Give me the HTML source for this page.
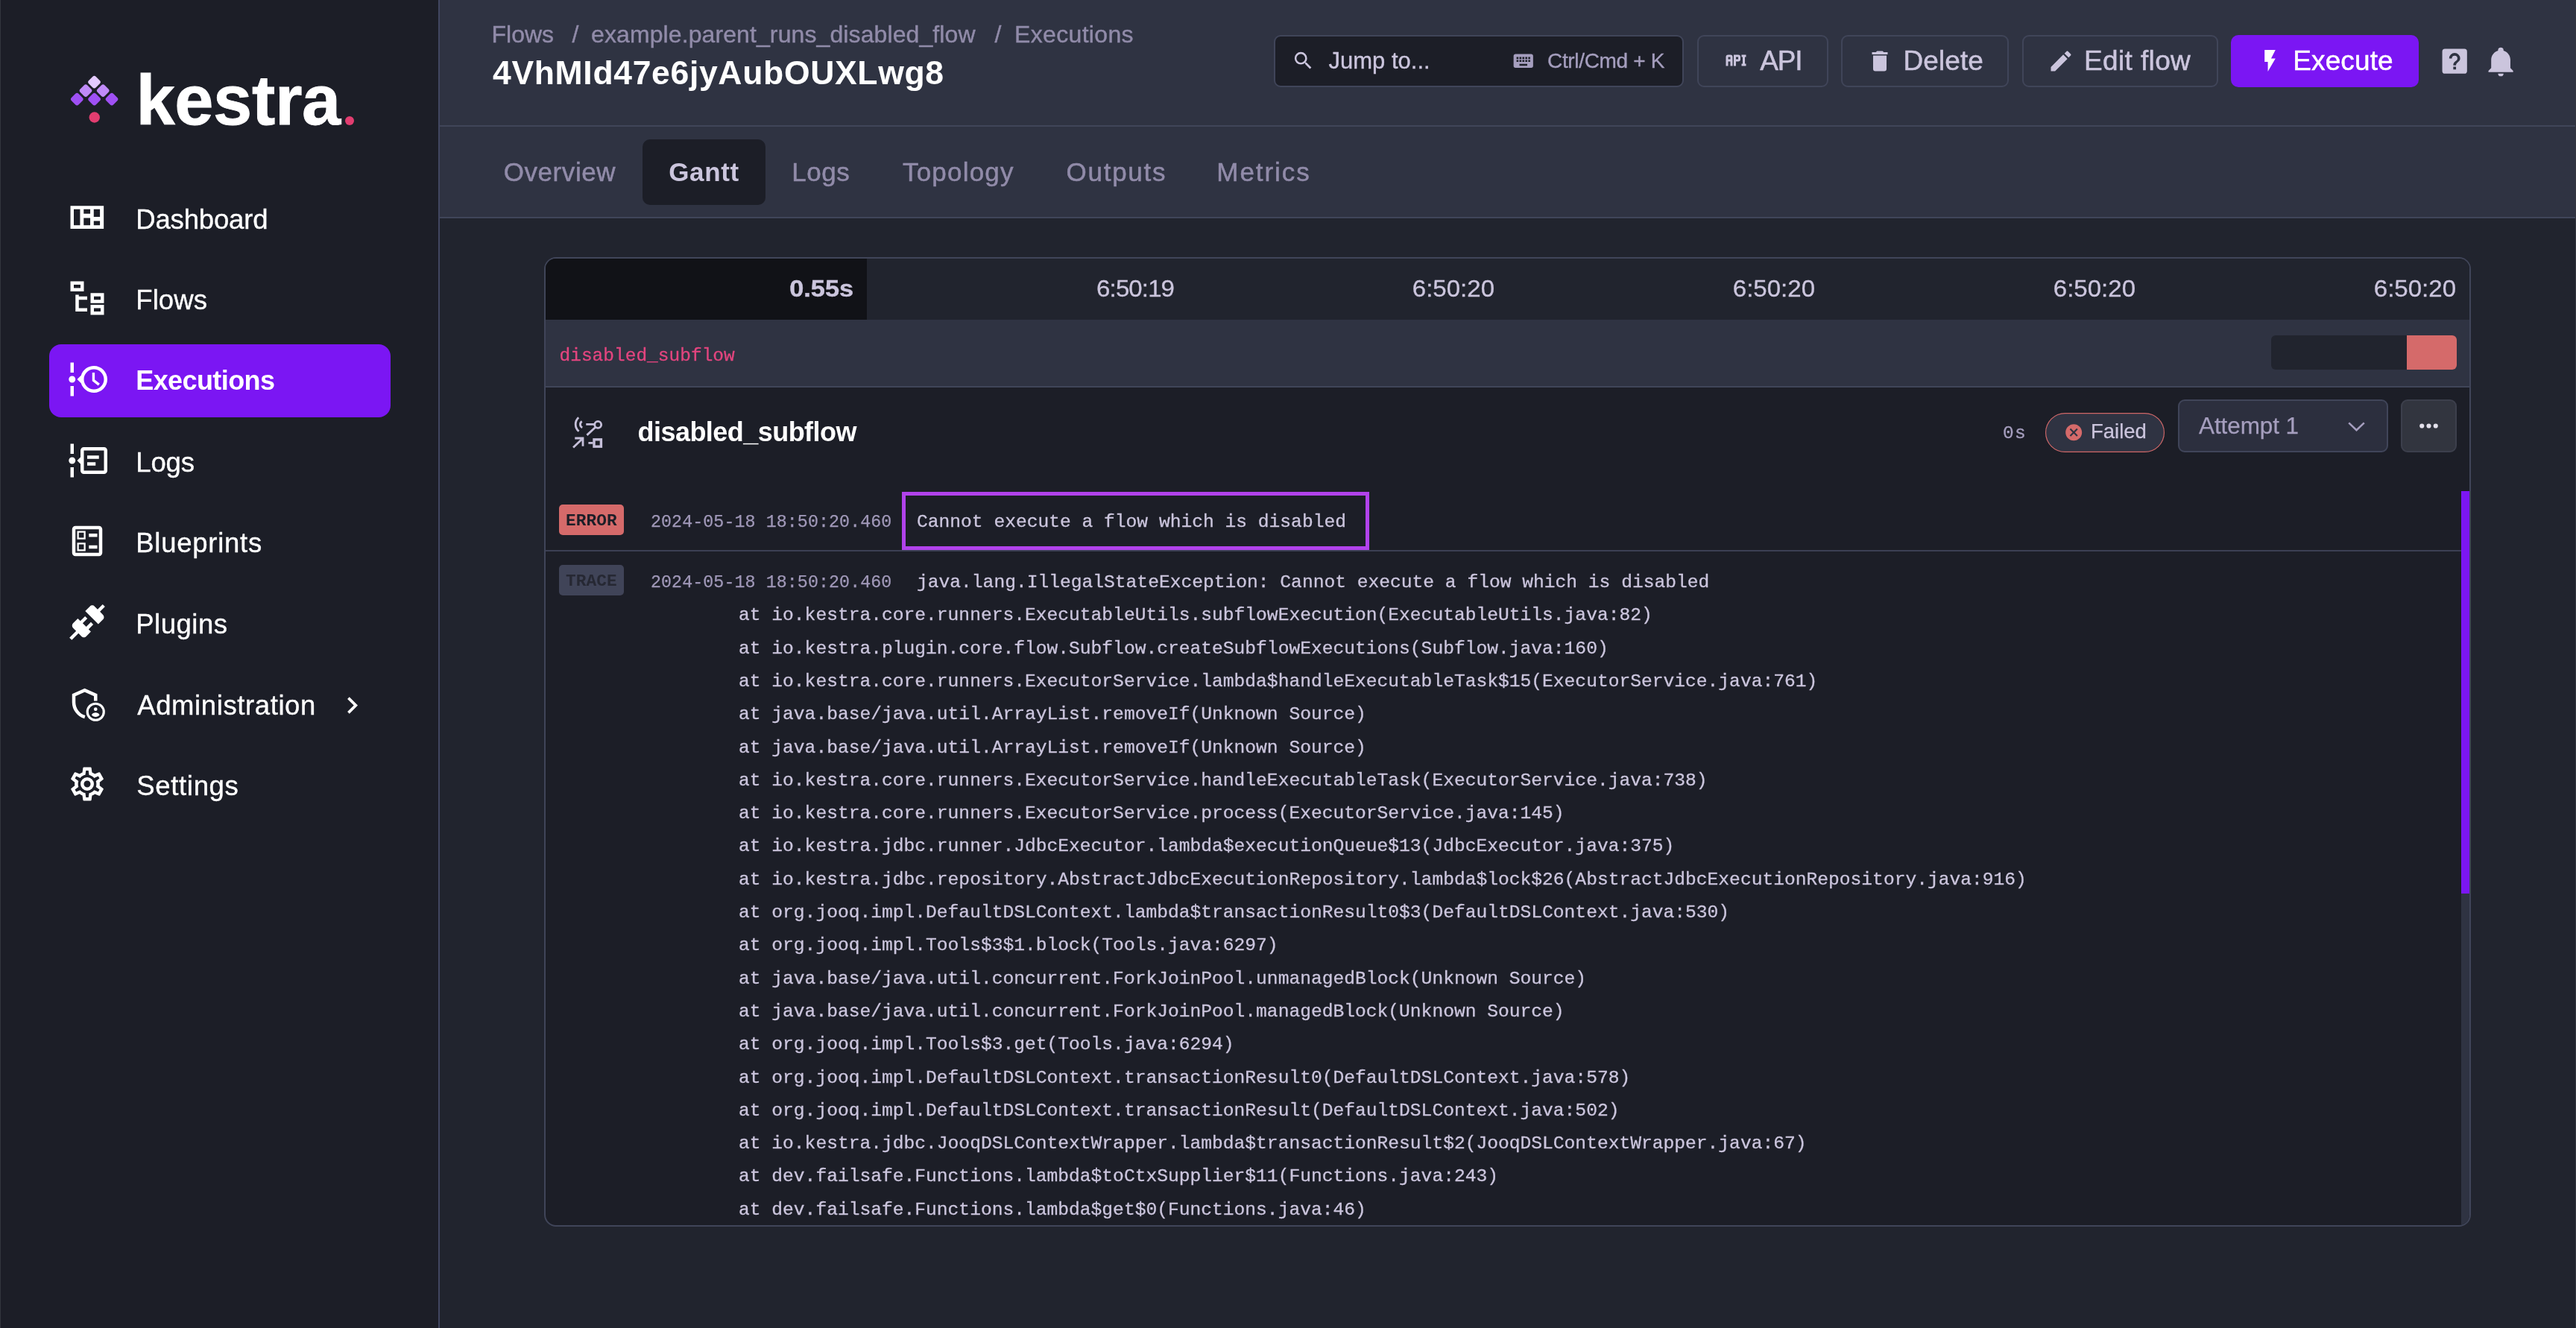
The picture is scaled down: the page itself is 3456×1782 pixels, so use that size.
<!DOCTYPE html>
<html lang="en">
<head>
<meta charset="utf-8">
<title>Kestra - Execution 4VhMId47e6jyAubOUXLwg8</title>
<style>
*{box-sizing:border-box;margin:0;padding:0}
html,body{width:3456px;height:1782px;overflow:hidden;background:#21242e}
body{position:relative;font-family:"Liberation Sans",sans-serif;color:#fff;-webkit-font-smoothing:antialiased}
svg{display:block}
.abs{position:absolute}
.nw{white-space:nowrap}

/* ---------- sidebar ---------- */
.sidebar{position:absolute;left:0;top:0;width:590px;height:1782px;background:#1c1e27;border-right:2px solid #414660}
.logo{position:absolute;left:0;top:0;width:588px;height:230px}
.logo .word{position:absolute;left:182.4px;top:88px;font-size:93.8px;font-weight:700;letter-spacing:-0.3px;line-height:94.6px;-webkit-text-stroke:.9px #fff;color:#fff;white-space:nowrap}
.logo .dot{position:absolute;left:463px;top:156.2px;width:12px;height:12px;border-radius:50%;background:#e23d70}
.menu{position:absolute;left:66px;top:244.8px;width:458px;list-style:none}
.menu li{position:relative;height:98px;margin-bottom:10.64px;border-radius:16px;font-size:36.5px;color:#fff}
.menu li.active{background:#7b16f3;font-weight:700;font-size:36px}
.menu li svg{position:absolute;left:23.75px;top:20px;width:54px;height:54px;fill:#fff}
.menu li span{position:absolute;left:116.25px;top:0;line-height:99px;white-space:nowrap;-webkit-text-stroke:.35px #fff}
.menu li.active span{-webkit-text-stroke:0;line-height:98px}
.menu li .chev{left:383.6px;top:27px;width:45px;height:45px}

/* ---------- top bar ---------- */
.topbar{position:absolute;left:590px;top:0;width:2866px;height:170px;background:#2f3342;border-bottom:2px solid #404559}
.crumbs{position:absolute;left:69.5px;top:23.6px;font-size:32px;line-height:44px;color:#918ba9;white-space:nowrap}
.crumbs span{position:absolute;top:0;white-space:nowrap}
h1{position:absolute;left:71px;top:69.6px;font-size:44.5px;line-height:56px;font-weight:700;letter-spacing:.67px;color:#fff;white-space:nowrap}
.btn{position:absolute;top:47px;height:70px;border:2px solid #404559;border-radius:9px;color:#cbc5dd;font-size:37px;white-space:nowrap}
.btn svg{position:absolute;fill:#cbc5dd}
.btn span{position:absolute;top:0;line-height:66px}
.search{background:#1c1e27}

/* ---------- tabs ---------- */
.tabs{position:absolute;left:590px;top:170px;width:2866px;height:123px;background:#2f3342;border-bottom:2px solid #404559;font-size:35px;color:#918ba9}
.tabs a{position:absolute;top:17px;height:88px;line-height:87px;white-space:nowrap;color:#918ba9;text-decoration:none}
.tabs a.on{background:#1c1e27;border-radius:10px;color:#cbc5dd;font-weight:700;text-align:center}

/* ---------- gantt card ---------- */
.card{position:absolute;left:730px;top:345px;width:2585px;height:1301px;border:2px solid #404559;border-radius:16px;background:#1c1e27;overflow:hidden}
.mono{font-family:"Liberation Mono",monospace}

/* card internals: coordinates relative to card padding box (origin 732,347) */
.thead{position:absolute;left:0;top:0;width:2581px;height:82px;background:#21242e;font-size:31.2px;color:#cbc5dd}
.thead div{position:absolute;top:0;height:82px;line-height:82px;text-align:right;padding-right:17.5px;white-space:nowrap}
.thead .dur{left:0;width:431px;background:#111217;font-weight:700;letter-spacing:0;padding-right:18px}
.taskrow{position:absolute;left:0;top:82px;width:2581px;height:90.5px;background:#2f3342;border-bottom:2px solid #404559}
.taskrow .id{position:absolute;left:18.5px;top:0;line-height:97px;font-size:24.5px;color:#e3457f;white-space:nowrap}
.bar{position:absolute;left:2315px;top:21px;width:249px;height:46px;border-radius:6px;background:#21242e;overflow:hidden}
.bar i{position:absolute;right:0;top:0;width:67.5px;height:46px;background:#d56a6a}
.taskhead{position:absolute;left:0;top:172.5px;width:2581px;height:140px}
.taskhead h2{position:absolute;left:123.5px;top:38px;font-size:36px;letter-spacing:-.54px;line-height:44px;font-weight:700;color:#fff;white-space:nowrap}
.dur0{position:absolute;left:2680px;top:554px;font-size:24.5px;line-height:40px;color:#a59ebe;letter-spacing:1.3px}
.pill{position:absolute;left:2012px;top:34.5px;width:160px;height:53px;border:0 solid #cf6666;box-shadow:inset 0 0 0 1.15px #cf6666;border-radius:27px;background:#2f3342;font-size:28px;color:#cbc5dd}
.pill svg{position:absolute;left:25px;top:13.3px;width:26.4px;height:26.4px;fill:#d56a6a}
.pill span{position:absolute;left:61px;top:0;line-height:50px;font-size:27.5px}
.select{position:absolute;left:2190px;top:16px;width:282px;height:71px;border:2px solid #404559;border-radius:9px;background:#2c2f3e;font-size:31.5px;color:#a59ebe}
.select span{position:absolute;left:26px;top:0;line-height:67px;letter-spacing:-.1px}
.select svg{position:absolute;left:226px;top:28px;width:23px;height:13px;fill:none;stroke:#a59ebe;stroke-width:2.6}
.more{position:absolute;left:2489px;top:16px;width:75px;height:71px;border:2px solid #3c3f4c;border-radius:9px;background:#32353f}
.more svg{position:absolute;left:17px;top:15px;width:37px;height:37px;fill:#e4e1ec}
.logs{position:absolute;left:0;top:312px;width:2570px;height:990px;font-size:24.62px;line-height:44.3px;color:#cbc5dd}
.logrow{position:absolute;left:0;width:2570px}
.badge{position:absolute;left:18px;width:87px;height:41px;border-radius:5px;font-size:22.75px;font-weight:700;line-height:41px;padding-top:2px;text-align:center;letter-spacing:.1px}
.badge.err{background:#d56a6a;color:#1c1e27}
.badge.trc{background:#404458;color:#262833}
.ts{position:absolute;left:141px;font-size:23.3px;color:#a098b8;white-space:nowrap;letter-spacing:.08px}
.msg{position:absolute;white-space:pre;color:#cbc5dd;-webkit-text-stroke:.3px #cbc5dd}
.hl{position:absolute;left:478px;top:1.3px;width:626.6px;height:77.3px;border:5.5px solid #b142eb}
.sep{position:absolute;left:0;top:79px;width:2570px;height:2px;background:#3c4054}
.scroll{position:absolute;left:2570px;top:312px;width:11px;height:990px;background:#2f3342}
.scroll i{position:absolute;left:0;top:0;width:11px;height:540px;background:#7b16f3}

.crumbs span{-webkit-text-stroke:.4px #918ba9}
.tabs a{-webkit-text-stroke:.5px #918ba9}
.tabs a.on{-webkit-text-stroke:0}
.btn span{-webkit-text-stroke:.5px currentColor}
.search span{-webkit-text-stroke:.35px currentColor}
.pill span,.select span{-webkit-text-stroke:.25px currentColor}
.ts{-webkit-text-stroke:.25px #a098b8}
.taskrow .id{-webkit-text-stroke:.3px #e3457f}

.thead span{display:inline-block;transform:scaleX(1.06);transform-origin:100% 50%;-webkit-text-stroke:.3px #cbc5dd}
.thead .dur span{transform:scaleX(1.1);-webkit-text-stroke:.4px #cbc5dd}
</style>
</head>
<body>
<div id="app" style="position:absolute;left:0;top:0;width:3456px;height:1782px;will-change:transform">

<aside class="sidebar">
  <div class="logo">
    <svg class="abs" style="left:90px;top:96px" width="74" height="74" viewBox="0 0 74 74">
      <g transform="translate(-90,-96)">
        <rect x="119.80" y="103.50" width="13.4" height="13.4" rx="3" transform="rotate(45 126.5 110.2)" fill="#e3c9ff"/>
        <rect x="108.30" y="114.90" width="13.4" height="13.4" rx="3" transform="rotate(45 115 121.6)" fill="#c08bf9"/>
        <rect x="131.50" y="114.90" width="13.4" height="13.4" rx="3" transform="rotate(45 138.2 121.6)" fill="#c08bf9"/>
        <rect x="96.60" y="126.50" width="13.4" height="13.4" rx="3" transform="rotate(45 103.3 133.2)" fill="#9f50f4"/>
        <rect x="119.90" y="126.50" width="13.4" height="13.4" rx="3" transform="rotate(45 126.6 133.2)" fill="#9f50f4"/>
        <rect x="143.30" y="126.50" width="13.4" height="13.4" rx="3" transform="rotate(45 150 133.2)" fill="#9f50f4"/>
        <circle cx="126.75" cy="157.5" r="7.2" fill="#e23d70"/>
      </g>
    </svg>
    <div class="word">kestra</div><div class="dot"></div>
  </div>
  <ul class="menu">
    <li><svg viewBox="0 0 24 24"><path fill-rule="evenodd" d="M2 4.95H21.85V18.7H2Z M4 7V16.6H7.75V7Z M9.9 7V9.67H13.8V7Z M9.9 12.17V16.6H13.8V12.17Z M15.9 7V11.6H19.6V7Z M15.9 14V16.6H19.6V14Z"/></svg><span style="letter-spacing:-0.16px">Dashboard</span></li>
    <li><svg viewBox="0 0 24 24"><path d="M12 13H7V18H12V20H5V10H7V11H12V13M8 4V6H4V4H8M10 2H2V8H10V2M20 11V13H16V11H20M22 9H14V15H22V9M20 18V20H16V18H20M22 16H14V22H22V16Z"/></svg><span style="letter-spacing:0.11px">Flows</span></li>
    <li class="active"><svg viewBox="0 0 24 24"><path d="M4 2V8H2V2H4M2 22H4V16H2V22M5 12C5 13.11 4.11 14 3 14C1.9 14 1 13.11 1 12C1 10.9 1.9 10 3 10C4.11 10 5 10.9 5 12M16 4C20.42 4 24 7.58 24 12C24 16.42 20.42 20 16 20C12.4 20 9.36 17.62 8.35 14.35L6 12L8.35 9.65C9.36 6.38 12.4 4 16 4M16 6C12.69 6 10 8.69 10 12C10 15.31 12.69 18 16 18C19.31 18 22 15.31 22 12C22 8.69 19.31 6 16 6M15 13L18.53 15.79L19.53 14.5L16.5 12.25V8H15V13Z"/></svg><span style="letter-spacing:-0.59px">Executions</span></li>
    <li><svg viewBox="0 0 24 24"><path d="M5 12C5 13.11 4.11 14 3 14C1.9 14 1 13.11 1 12C1 10.9 1.9 10 3 10C4.11 10 5 10.9 5 12M4 2V8H2V2H4M2 22V16H4V22H2M24 6V18C24 19.11 23.11 20 22 20H10C8.9 20 8 19.11 8 18V14L6 12L8 10V6C8 4.89 8.9 4 10 4H22C23.11 4 24 4.89 24 6M10 6V18H22V6H10M12 9H19V11H12V9M12 13H17V15H12V13Z"/></svg><span style="letter-spacing:-0.13px">Logs</span></li>
    <li><svg viewBox="0 0 24 24"><path d="M13 7.5H18V9.5H13V7.5M13 14.5H18V16.5H13V14.5M19 3C20.1 3 21 3.9 21 5V19C21 20.1 20.1 21 19 21H5C3.9 21 3 20.1 3 19V5C3 3.9 3.9 3 5 3H19M19 19V5H5V19H19M11 6V11H6V6H11M10 10V7H7V10H10M11 13V18H6V13H11M10 17V14H7V17H10Z"/></svg><span style="letter-spacing:0.74px">Blueprints</span></li>
    <li><svg viewBox="0 0 24 24"><path d="M21.4 7.5C22.2 8.3 22.2 9.6 21.4 10.3L18.6 13.1L10.8 5.3L13.6 2.5C14.4 1.7 15.7 1.7 16.4 2.5L18.2 4.3L21.2 1.3L22.6 2.7L19.6 5.7L21.4 7.5M15.6 13.3L14.2 11.9L11.4 14.7L9.3 12.6L12.1 9.8L10.7 8.4L7.9 11.2L6.4 9.8L3.6 12.6C2.8 13.4 2.8 14.7 3.6 15.4L5.4 17.2L1.4 21.2L2.8 22.6L6.8 18.6L8.6 20.4C9.4 21.2 10.7 21.2 11.4 20.4L14.2 17.6L12.8 16.2L15.6 13.3Z"/></svg><span style="letter-spacing:0.5px">Plugins</span></li>
    <li><svg viewBox="0 0 24 24"><g fill="none" stroke="#fff"><path stroke-width="2" d="M17 10.4V6.95L10.5 4.1L4 6.95V11.2C4 15.3 6.8 19 10.6 20.05"/><circle cx="17" cy="17" r="4.9" stroke-width="1.4"/></g><circle cx="17" cy="15.4" r="1.05"/><path d="M14.7 18.9C14.7 17.9 16.2 17.4 17 17.4S19.3 17.9 19.3 18.9C18.8 19.6 17.9 20 17 20S15.2 19.6 14.7 18.9Z"/></svg><span style="letter-spacing:0.6px;margin-left:2px">Administration</span><svg class="chev" viewBox="0 0 24 24"><path d="M8.59,16.58L13.17,12L8.59,7.41L10,6L16,12L10,18L8.59,16.58Z"/></svg></li>
    <li><svg viewBox="0 0 24 24"><path d="M12,8A4,4 0 0,1 16,12A4,4 0 0,1 12,16A4,4 0 0,1 8,12A4,4 0 0,1 12,8M12,10A2,2 0 0,0 10,12A2,2 0 0,0 12,14A2,2 0 0,0 14,12A2,2 0 0,0 12,10M10,22C9.75,22 9.54,21.82 9.5,21.58L9.13,18.93C8.5,18.68 7.96,18.34 7.44,17.94L4.95,18.95C4.73,19.03 4.46,18.95 4.34,18.73L2.34,15.27C2.21,15.05 2.27,14.78 2.46,14.63L4.57,12.97L4.5,12L4.57,11L2.46,9.37C2.27,9.22 2.21,8.95 2.34,8.73L4.34,5.27C4.46,5.05 4.73,4.96 4.95,5.05L7.44,6.05C7.96,5.66 8.5,5.32 9.13,5.07L9.5,2.42C9.54,2.18 9.75,2 10,2H14C14.25,2 14.46,2.18 14.5,2.42L14.87,5.07C15.5,5.32 16.04,5.66 16.56,6.05L19.05,5.05C19.27,4.96 19.54,5.05 19.66,5.27L21.66,8.73C21.79,8.95 21.73,9.22 21.54,9.37L19.43,11L19.5,12L19.43,13L21.54,14.63C21.73,14.78 21.79,15.05 21.66,15.27L19.66,18.73C19.54,18.95 19.27,19.04 19.05,18.95L16.56,17.95C16.04,18.34 15.5,18.68 14.87,18.93L14.5,21.58C14.46,21.82 14.25,22 14,22H10M11.25,4L10.88,6.61C9.68,6.86 8.62,7.5 7.85,8.39L5.44,7.35L4.69,8.65L6.8,10.2C6.4,11.37 6.4,12.64 6.8,13.8L4.68,15.36L5.43,16.66L7.86,15.62C8.63,16.5 9.68,17.14 10.87,17.38L11.24,20H12.76L13.13,17.39C14.32,17.14 15.37,16.5 16.14,15.62L18.57,16.66L19.32,15.36L17.2,13.81C17.6,12.64 17.6,11.37 17.2,10.2L19.31,8.65L18.56,7.35L16.15,8.39C15.38,7.5 14.32,6.86 13.12,6.62L12.75,4H11.25Z"/></svg><span style="letter-spacing:0.67px;margin-left:1px">Settings</span></li>
  </ul>
</aside>

<header class="topbar">
  <div class="crumbs">
    <span style="left:0;letter-spacing:0">Flows</span>
    <span style="left:108px">/</span>
    <span style="left:133.5px;letter-spacing:.1px">example.parent_runs_disabled_flow</span>
    <span style="left:675px">/</span>
    <span style="left:701.5px;letter-spacing:.34px">Executions</span>
  </div>
  <h1>4VhMId47e6jyAubOUXLwg8</h1>

  <div class="btn search" style="left:1119px;width:550px">
    <svg style="left:21.9px;top:17.1px;width:30.9px;height:30.9px;fill:#cbc5dd" class="abs" viewBox="0 0 24 24"><path d="M9.5,3A6.5,6.5 0 0,1 16,9.5C16,11.11 15.41,12.59 14.44,13.73L14.71,14H15.5L20.5,19L19,20.5L14,15.5V14.71L13.73,14.44C12.59,15.41 11.11,16 9.5,16A6.5,6.5 0 0,1 3,9.5A6.5,6.5 0 0,1 9.5,3M9.5,5C7,5 5,7 5,9.5C5,12 7,14 9.5,14C12,14 14,12 14,9.5C14,7 12,5 9.5,5Z"/></svg>
    <span style="left:71.5px;font-size:31px;color:#cbc5dd">Jump to...</span>
    <svg style="left:316.6px;top:16.5px;width:31.5px;height:31.5px;fill:#a59ebe" class="abs" viewBox="0 0 24 24"><path d="M19,10H17V8H19M19,13H17V11H19M16,10H14V8H16M16,13H14V11H16M16,17H8V15H16M7,10H5V8H7M7,13H5V11H7M8,11H10V13H8M8,8H10V10H8M11,11H13V13H11M11,8H13V10H11M20,5H4C2.89,5 2,5.89 2,7V17A2,2 0 0,0 4,19H20A2,2 0 0,0 22,17V7C22,5.89 21.1,5 20,5Z"/></svg>
    <span style="left:365px;font-size:28px;letter-spacing:-.33px;color:#a59ebe">Ctrl/Cmd + K</span>
  </div>
  <div class="btn" style="left:1687px;width:176px">
    <svg style="left:32.4px;top:14px;width:36px;height:36px" class="abs" viewBox="0 0 24 24"><path d="M7 7H5A2 2 0 0 0 3 9V17H5V13H7V17H9V9A2 2 0 0 0 7 7M7 11H5V9H7M14 7H10V17H12V13H14A2 2 0 0 0 16 11V9A2 2 0 0 0 14 7M14 11H12V9H14M20 9V15H21V17H17V15H18V9H17V7H21V9Z"/></svg>
    <span style="left:82.25px;letter-spacing:-1.15px">API</span>
  </div>
  <div class="btn" style="left:1880px;width:225px">
    <svg style="left:31.75px;top:14.5px;width:36px;height:36px" class="abs" viewBox="0 0 24 24"><path d="M19,4H15.5L14.5,3H9.5L8.5,4H5V6H19M6,19A2,2 0 0,0 8,21H16A2,2 0 0,0 18,19V7H6V19Z"/></svg>
    <span style="left:81.5px;letter-spacing:.09px">Delete</span>
  </div>
  <div class="btn" style="left:2123px;width:263px">
    <svg style="left:32.25px;top:14.75px;width:36px;height:36px" class="abs" viewBox="0 0 24 24"><path d="M20.71,7.04C21.1,6.65 21.1,6 20.71,5.63L18.37,3.29C18,2.9 17.35,2.9 16.96,3.29L15.12,5.12L18.87,8.87M3,17.25V21H6.75L17.81,9.93L14.06,6.18L3,17.25Z"/></svg>
    <span style="left:81px;letter-spacing:.37px">Edit flow</span>
  </div>
  <div class="btn" style="left:2403px;width:252px;background:#7b16f3;border-color:#7b16f3;color:#fff;border-radius:10px">
    <svg style="left:32.6px;top:15.3px;width:35px;height:35px;fill:#fff" class="abs" viewBox="0 0 24 24"><path d="M7,2V13H10V22L17,10H13L17,2H7Z"/></svg>
    <span style="left:81.25px;letter-spacing:.12px">Execute</span>
  </div>
  <svg style="left:2680.9px;top:60.2px;width:44.4px;height:44.4px;fill:#cbc5dd" class="abs" viewBox="0 0 24 24"><path d="M11,18H13V16H11V18M12,6A4,4 0 0,0 8,10H10A2,2 0 0,1 12,8A2,2 0 0,1 14,10C14,12 11,11.75 11,15H13C13,12.75 16,12.5 16,10A4,4 0 0,0 12,6M5,3H19A2,2 0 0,1 21,5V19A2,2 0 0,1 19,21H5A2,2 0 0,1 3,19V5A2,2 0 0,1 5,3Z"/></svg>
  <svg style="left:2743px;top:59.9px;width:44.2px;height:44.2px;fill:#cbc5dd" class="abs" viewBox="0 0 24 24"><path d="M21,19V20H3V19L5,17V11C5,7.9 7.03,5.17 10,4.29C10,4.19 10,4.1 10,4A2,2 0 0,1 12,2A2,2 0 0,1 14,4C14,4.1 14,4.19 14,4.29C16.97,5.17 19,7.9 19,11V17L21,19M14,21A2,2 0 0,1 12,23A2,2 0 0,1 10,21"/></svg>
</header>

<nav class="tabs">
  <a style="left:85.75px;letter-spacing:.56px">Overview</a>
  <a class="on" style="left:272px;width:165px;letter-spacing:.63px">Gantt</a>
  <a style="left:472.3px;letter-spacing:.53px">Logs</a>
  <a style="left:621px;letter-spacing:1.2px">Topology</a>
  <a style="left:840.5px;letter-spacing:1.74px">Outputs</a>
  <a style="left:1042.3px;letter-spacing:1.95px">Metrics</a>
</nav>

<main class="card">
  <div class="thead">
    <div class="dur"><span>0.55s</span></div>
    <div style="left:431px;width:430px;letter-spacing:-.85px"><span>6:50:19</span></div>
    <div style="left:861px;width:430px"><span>6:50:20</span></div>
    <div style="left:1291px;width:430px"><span>6:50:20</span></div>
    <div style="left:1721px;width:430px"><span>6:50:20</span></div>
    <div style="left:2151px;width:430px"><span>6:50:20</span></div>
  </div>
  <div class="taskrow">
    <code class="id mono">disabled_subflow</code>
    <div class="bar"><i></i></div>
  </div>
  <svg class="abs" style="left:32px;top:208px" width="52" height="52" viewBox="0 0 52 52" fill="none" stroke="#c6c0da" stroke-width="2.8">
      <path d="M12.25 5.3A12.2 12.2 0 0 0 12.6 23.75"/><path d="M16.75 10.5A4.6 4.6 0 0 0 17.25 18.75"/>
      <circle cx="38.2" cy="14.9" r="4.45"/><path d="M22.25 14.4H33.6M34.9 18.3L23.4 28.9"/>
      <path d="M5.06 45.5L17.6 33.4M7.25 33H18V43.75"/>
      <rect x="33" y="34.8" width="9.4" height="9.4" stroke-width="3.4"/><path d="M25.4 39.4H31.5"/>
    </svg>
  <div class="taskhead">
    <h2>disabled_subflow</h2>
    <span class="mono abs" style="left:1955px;top:42px;font-size:24.5px;line-height:40px;color:#a59ebe;letter-spacing:1.3px;-webkit-text-stroke:.3px #a59ebe">0s</span>
    <div class="pill"><svg viewBox="0 0 24 24"><path d="M12,2C17.53,2 22,6.47 22,12C22,17.53 17.53,22 12,22C6.47,22 2,17.53 2,12C2,6.47 6.47,2 12,2M15.59,7L12,10.59L8.41,7L7,8.41L10.59,12L7,15.59L8.41,17L12,13.41L15.59,17L17,15.59L13.41,12L17,8.41L15.59,7Z"/></svg><span>Failed</span></div>
    <div class="select"><span>Attempt 1</span><svg viewBox="0 0 23 13"><path d="M1.2 1.4L11.5 11.2L21.8 1.4"/></svg></div>
    <div class="more"><svg viewBox="0 0 24 24"><path d="M16,12A2,2 0 0,1 18,10A2,2 0 0,1 20,12A2,2 0 0,1 18,14A2,2 0 0,1 16,12M10,12A2,2 0 0,1 12,10A2,2 0 0,1 14,12A2,2 0 0,1 12,14A2,2 0 0,1 10,12M4,12A2,2 0 0,1 6,10A2,2 0 0,1 8,12A2,2 0 0,1 6,14A2,2 0 0,1 4,12Z"/></svg></div>
  </div>
  <div class="logs mono">
    <div class="logrow" style="top:0;height:81px">
      <span class="badge err" style="top:18px">ERROR</span>
      <span class="ts" style="top:20px">2024-05-18 18:50:20.460</span>
      <div class="hl"></div>
      <div class="msg" style="left:498px;top:20px">Cannot execute a flow which is disabled</div>
      <div class="sep"></div>
    </div>
    <div class="logrow" style="top:81px;height:920px">
      <span class="badge trc" style="top:18px">TRACE</span>
      <span class="ts" style="top:20px">2024-05-18 18:50:20.460</span>
      <div class="abs" style="left:0;top:20px">
<div class="msg" style="left:498px;top:0.0px">java.lang.IllegalStateException: Cannot execute a flow which is disabled</div>
<div class="msg" style="left:259px;top:44.3px">at io.kestra.core.runners.ExecutableUtils.subflowExecution(ExecutableUtils.java:82)</div>
<div class="msg" style="left:259px;top:88.6px">at io.kestra.plugin.core.flow.Subflow.createSubflowExecutions(Subflow.java:160)</div>
<div class="msg" style="left:259px;top:132.9px">at io.kestra.core.runners.ExecutorService.lambda$handleExecutableTask$15(ExecutorService.java:761)</div>
<div class="msg" style="left:259px;top:177.2px">at java.base/java.util.ArrayList.removeIf(Unknown Source)</div>
<div class="msg" style="left:259px;top:221.5px">at java.base/java.util.ArrayList.removeIf(Unknown Source)</div>
<div class="msg" style="left:259px;top:265.8px">at io.kestra.core.runners.ExecutorService.handleExecutableTask(ExecutorService.java:738)</div>
<div class="msg" style="left:259px;top:310.1px">at io.kestra.core.runners.ExecutorService.process(ExecutorService.java:145)</div>
<div class="msg" style="left:259px;top:354.4px">at io.kestra.jdbc.runner.JdbcExecutor.lambda$executionQueue$13(JdbcExecutor.java:375)</div>
<div class="msg" style="left:259px;top:398.7px">at io.kestra.jdbc.repository.AbstractJdbcExecutionRepository.lambda$lock$26(AbstractJdbcExecutionRepository.java:916)</div>
<div class="msg" style="left:259px;top:443.0px">at org.jooq.impl.DefaultDSLContext.lambda$transactionResult0$3(DefaultDSLContext.java:530)</div>
<div class="msg" style="left:259px;top:487.3px">at org.jooq.impl.Tools$3$1.block(Tools.java:6297)</div>
<div class="msg" style="left:259px;top:531.6px">at java.base/java.util.concurrent.ForkJoinPool.unmanagedBlock(Unknown Source)</div>
<div class="msg" style="left:259px;top:575.9px">at java.base/java.util.concurrent.ForkJoinPool.managedBlock(Unknown Source)</div>
<div class="msg" style="left:259px;top:620.2px">at org.jooq.impl.Tools$3.get(Tools.java:6294)</div>
<div class="msg" style="left:259px;top:664.5px">at org.jooq.impl.DefaultDSLContext.transactionResult0(DefaultDSLContext.java:578)</div>
<div class="msg" style="left:259px;top:708.8px">at org.jooq.impl.DefaultDSLContext.transactionResult(DefaultDSLContext.java:502)</div>
<div class="msg" style="left:259px;top:753.1px">at io.kestra.jdbc.JooqDSLContextWrapper.lambda$transactionResult$2(JooqDSLContextWrapper.java:67)</div>
<div class="msg" style="left:259px;top:797.4px">at dev.failsafe.Functions.lambda$toCtxSupplier$11(Functions.java:243)</div>
<div class="msg" style="left:259px;top:841.7px">at dev.failsafe.Functions.lambda$get$0(Functions.java:46)</div>
      </div>
    </div>
  </div>
  <div class="scroll"><i></i></div>
</main>

<div class="abs" style="left:0;top:0;width:1px;height:1782px;background:#33363d"></div>
<div class="abs" style="left:3455px;top:0;width:1px;height:1782px;background:#34363f"></div>
</div>
</body>
</html>
